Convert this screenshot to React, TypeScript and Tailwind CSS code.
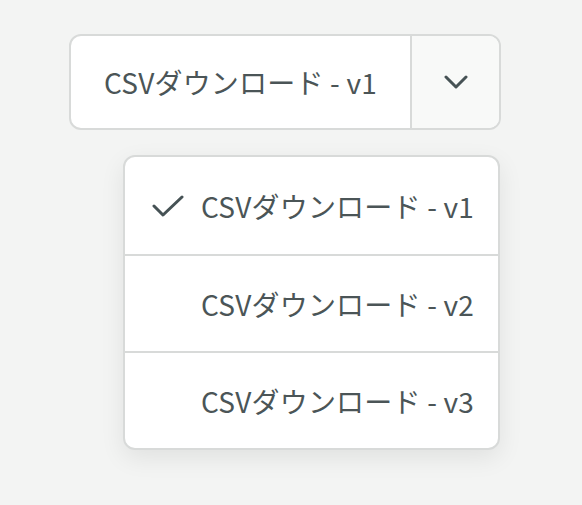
import React from "react";

const font = { fontFamily: '"Noto Sans CJK JP", "Noto Sans", sans-serif' };

function Chevron() {
  return (
    <svg width="24" height="16" viewBox="0 0 24 16" fill="none">
      <path d="M2 3l10 10L22 3" stroke="#465255" strokeWidth="3" strokeLinecap="round" strokeLinejoin="round" />
    </svg>
  );
}

function Check() {
  return (
    <svg width="32" height="22" viewBox="0 0 32 22" fill="none">
      <path d="M2 11l9 9L30 2" stroke="#465255" strokeWidth="3" strokeLinecap="round" strokeLinejoin="round" />
    </svg>
  );
}

const items = ["CSVダウンロード - v1", "CSVダウンロード - v2", "CSVダウンロード - v3"];

export default function App() {
  return (
    <div className="min-h-[505px] w-full bg-[#f3f4f3] pl-[69px] pt-[34px]" style={font}>
      <div className="flex h-[96px] w-[432px] overflow-hidden rounded-[12px] border-2 border-[#d8dad9] bg-white">
        <button className="flex flex-1 items-center justify-center text-[28px] tracking-[0.2px] text-[#4b5557]">
          {items[0]}
        </button>
        <div className="flex w-[89px] items-center justify-center border-l-2 border-[#d8dad9] bg-[#f8f9f8]">
          <Chevron />
        </div>
      </div>

      <div className="ml-[54px] mt-[25px] w-[377px] overflow-hidden rounded-[12px] border-2 border-[#d8dad9] bg-white shadow-[0_8px_24px_rgba(0,0,0,0.08)]">
        {items.map((label, i) => (
          <div
            key={label}
            className={`flex h-[97px] items-center pl-[27px] text-[28px] tracking-[0.2px] text-[#4b5557] ${i > 0 ? "border-t-2 border-[#d8dad9]" : ""}`}
          >
            <span className="flex w-[49px] items-center">{i === 0 ? <Check /> : null}</span>
            <span>{label}</span>
          </div>
        ))}
      </div>
    </div>
  );
}
